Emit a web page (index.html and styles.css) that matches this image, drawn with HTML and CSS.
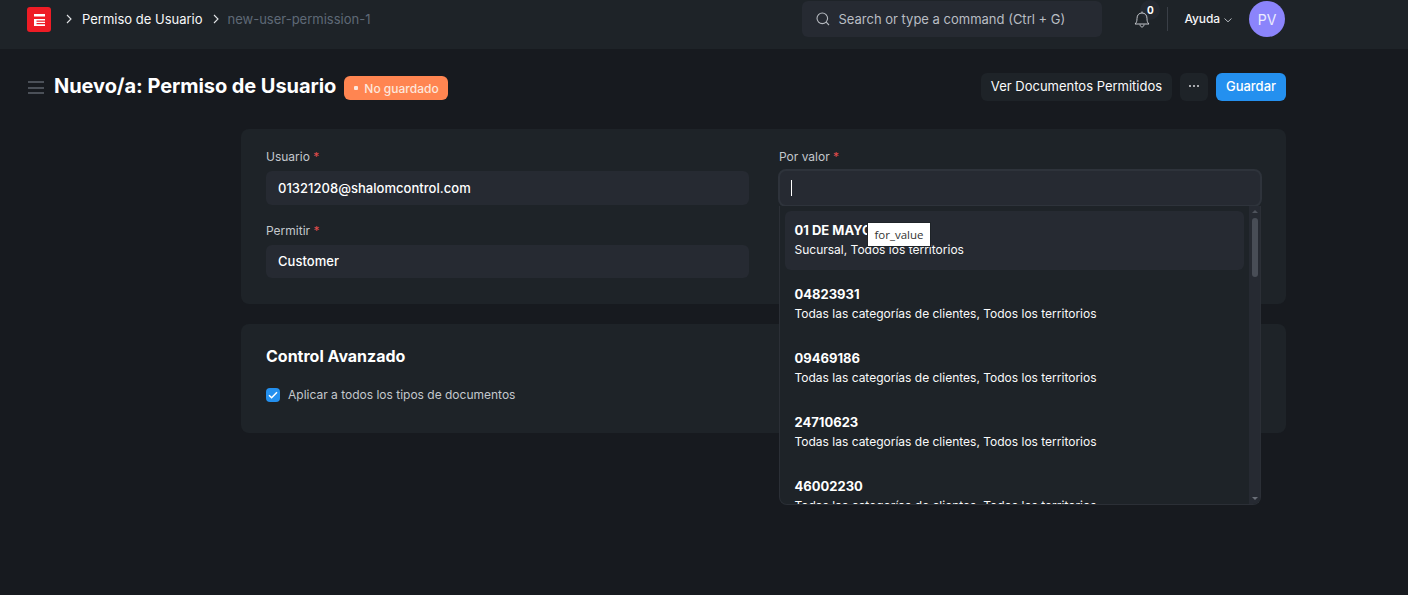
FILE: index.html
```html
<!DOCTYPE html>
<html lang="es">
<head>
<meta charset="utf-8">
<title>Nuevo/a: Permiso de Usuario</title>
<link rel="stylesheet" href="styles.css">
</head>
<body>
<header class="navbar">
  <div class="logo">
    <svg width="11" height="12" viewBox="0 0 11 12"><path d="M0 0h11v2.500H0zM0 5h11v1.600H2.500v1.200H11V9H2.500v1.200H11V12H0z" fill="#fff"/></svg>
  </div>
  <svg class="crumb-sep first" width="8" height="10" viewBox="0 0 8 10"><path d="M2 1l4 4-4 4" fill="none" stroke="#e2e4e7" stroke-width="1.100"/></svg>
  <span class="crumb">Permiso de Usuario</span>
  <svg class="crumb-sep" width="8" height="10" viewBox="0 0 8 10"><path d="M2 1l4 4-4 4" fill="none" stroke="#e2e4e7" stroke-width="1.100"/></svg>
  <span class="crumb-muted">new-user-permission-1</span>
  <div class="nav-right">
    <div class="search">
      <svg width="14" height="14" viewBox="0 0 14 14"><circle cx="6.300" cy="6.300" r="5.300" fill="none" stroke="#b5b9bf" stroke-width="1.100"/><path d="M10.200 10.200L13 13" stroke="#b5b9bf" stroke-width="1.100"/></svg>
      <span>Search or type a command (Ctrl + G)</span>
    </div>
    <div class="bell">
      <span class="bell-badge">0</span>
      <svg width="16" height="18" viewBox="0 0 16 18"><path d="M1 14c1.600-1.400 2-3 2-5.500C3 5 5 3 8 3s5 2 5 5.500c0 2.500.4 4.100 2 5.500zM6 14.500c0 1.500 1 2.500 2 2.500s2-1 2-2.500M8 3V1.500" fill="none" stroke="#c3c6cb" stroke-width="1"/></svg>
    </div>
    <div class="nav-divider"></div>
    <span class="help">Ayuda</span>
    <svg class="help-chev" width="8" height="6" viewBox="0 0 8 6"><path d="M.5 1.500L4 4.800l3.500-3.300" fill="none" stroke="#b5b9bf" stroke-width="1"/></svg>
    <div class="avatar">PV</div>
  </div>
</header>

<main class="page">
  <div class="page-head">
    <div class="menu-toggle"><i></i><i></i><i></i></div>
    <h1 class="title">Nuevo/a: Permiso de Usuario</h1>
    <span class="status"><b class="status-dot"></b>No guardado</span>
    <div class="actions">
      <button class="btn btn-wide">Ver Documentos Permitidos</button>
      <button class="btn btn-more"><i></i><i></i><i></i></button>
      <button class="btn btn-primary">Guardar</button>
    </div>
  </div>

  <div class="content">
    <section class="card card-form">
      <div class="col">
        <div class="field">
          <label class="label">Usuario <em>*</em></label>
          <div class="input">01321208@shalomcontrol.com</div>
        </div>
        <div class="field">
          <label class="label">Permitir <em>*</em></label>
          <div class="input input-short">Customer</div>
        </div>
      </div>
      <div class="col col-right">
        <div class="field">
          <label class="label label-right">Por valor <em>*</em></label>
          <div class="input input-focus"><span class="caret"></span></div>
          <div class="dropdown">
            <ul class="options">
              <li class="option active"><strong>01 DE MAYO</strong><span>Sucursal, Todos los territorios</span></li>
              <li class="option"><strong>04823931</strong><span>Todas las categorías de clientes, Todos los territorios</span></li>
              <li class="option"><strong>09469186</strong><span>Todas las categorías de clientes, Todos los territorios</span></li>
              <li class="option"><strong>24710623</strong><span>Todas las categorías de clientes, Todos los territorios</span></li>
              <li class="option"><strong>46002230</strong><span>Todas las categorías de clientes, Todos los territorios</span></li>
            </ul>
            <div class="scrollbar">
              <b class="arrow-up"></b>
              <b class="thumb"></b>
              <b class="arrow-down"></b>
            </div>
          </div>
          <div class="tooltip">for_value</div>
        </div>
      </div>
    </section>

    <section class="card card-adv">
      <h2 class="section-title">Control Avanzado</h2>
      <div class="check-row">
        <span class="checkbox">
          <svg width="10" height="8" viewBox="0 0 10 8"><path d="M1 4.200l2.600 2.500L9 1.200" fill="none" stroke="#fff" stroke-width="1.500"/></svg>
        </span>
        <span class="check-label">Aplicar a todos los tipos de documentos</span>
      </div>
    </section>
  </div>
</main>
</body>
</html>
```

FILE: styles.css
```css
* { box-sizing: border-box; }

html, body {
  margin: 0;
  height: 595px;
  overflow: hidden;
}

body {
  background: #171a1f;
  color: #f3f4f6;
  font-family: Inter, "Noto Sans", sans-serif;
  font-size: 13px;
}

.navbar {
  height: 49px;
  background: #1e2328;
  display: flex;
  align-items: flex-start;
  padding: 1px 123px 0 27px;
}

.logo {
  width: 24px;
  height: 25px;
  margin-top: 6px;
  background: #ee1c25;
  border-radius: 3px;
  display: flex;
  align-items: center;
  justify-content: center;
}

.crumb-sep {
  margin-top: 13px;
  margin-left: 9px;
  margin-right: 8px;
}
.crumb-sep.first {
  margin-left: 14px;
  margin-right: 9px;
}

.crumb {
  margin-top: 10px;
  line-height: 16px;
  color: #f7f8f9;
}

.crumb-muted {
  margin-top: 10px;
  line-height: 16px;
  color: #5e6976;
}

.nav-right {
  margin-left: auto;
  display: flex;
  align-items: flex-start;
}

.search {
  width: 300px;
  height: 36px;
  background: #262a32;
  border-radius: 6px;
  display: flex;
  align-items: center;
  gap: 8px;
  padding-left: 14px;
  color: #b9bdc3;
}

.bell {
  width: 33px;
  height: 30px;
  margin-left: 32px;
  padding-top: 9px;
  position: relative;
}

.bell-badge {
  position: absolute;
  left: 6px;
  top: -1px;
  width: 20px;
  height: 20px;
  border-radius: 50%;
  background: #242830;
  color: #fff;
  font-size: 10px;
  font-weight: 700;
  text-align: center;
  line-height: 20px;
}
.bell svg { position: relative; }

.nav-divider {
  width: 1px;
  height: 24px;
  margin-top: 6px;
  background: #3a3f47;
}

.help {
  margin-left: 16px;
  margin-top: 10px;
  line-height: 16px;
  font-size: 12px;
  font-weight: 500;
  letter-spacing: -0.1px;
  color: #f3f4f6;
}

.help-chev {
  margin: 16px 0 0 4px;
}

.avatar {
  width: 36px;
  height: 36px;
  margin-left: 17px;
  border-radius: 50%;
  background: #8b84fb;
  color: #ececfe;
  font-size: 14px;
  display: flex;
  align-items: center;
  justify-content: center;
}

.page {
  padding: 24px 122px 0 28px;
}

.page-head {
  display: flex;
  align-items: center;
  height: 28px;
}

.menu-toggle {
  width: 16px;
  height: 13px;
  margin-right: 10px;
  display: flex;
  flex-direction: column;
  justify-content: space-between;
  margin-top: 1px;
}
.menu-toggle i {
  display: block;
  height: 2px;
  background: #4b5058;
}

.title {
  margin: 0 8px 2px 0;
  font-size: 20px;
  font-weight: 700;
  line-height: 28px;
  letter-spacing: -0.06px;
  color: #fff;
}

.status {
  height: 24px;
  width: 104px;
  margin-top: 2px;
  border-radius: 6px;
  background: #ff8551;
  color: #fde7dc;
  font-size: 12px;
  font-weight: 500;
  display: flex;
  align-items: center;
  padding-left: 10px;
  gap: 6px;
}
.status-dot {
  width: 4px;
  height: 4px;
  background: #fde7dc;
  border-radius: 1px;
}

.actions {
  margin-left: auto;
  display: flex;
  gap: 8px;
}

.btn {
  height: 28px;
  border: 0;
  border-radius: 6px;
  background: #1e2328;
  color: #fafbfc;
  font: inherit;
  padding: 0 0 2px;
}
.btn-wide { width: 191px; }
.btn-more {
  width: 28px;
  display: flex;
  align-items: center;
  justify-content: center;
  gap: 2px;
}
.btn-more i {
  width: 2px;
  height: 2px;
  border-radius: 50%;
  background: #d8dadd;
}
.btn-primary {
  width: 70px;
  background: #2490ef;
  color: #fff;
  font-weight: 500;
}

.content {
  padding: 28px 0 0 213px;
  display: flex;
  flex-direction: column;
  gap: 20px;
}

.card {
  background: #1e2328;
  border-radius: 8px;
  padding-left: 25px;
  padding-right: 24px;
}

.card-form {
  height: 175px;
  padding-top: 20px;
  display: grid;
  grid-template-columns: 483px 484px;
  column-gap: 29px;
}

.field { position: relative; margin-bottom: 18px; }

.label {
  display: block;
  font-size: 12px;
  line-height: 16px;
  margin-bottom: 6px;
  color: #c4c8cd;
}
.label-right { padding-left: 1px; }
.label em {
  color: #e24c4c;
  font-style: normal;
}

.input {
  height: 34px;
  background: #262a32;
  border-radius: 6px;
  padding: 0 12px;
  line-height: 34px;
  font-weight: 500;
  letter-spacing: 0.03px;
  color: #fff;
}
.input-short { height: 33px; line-height: 33px; }

.input-focus {
  height: 38px;
  margin-top: -2px;
  border: 2px solid #2e333b;
  border-radius: 8px;
  padding-left: 11px;
  display: flex;
  align-items: center;
}

.caret {
  width: 1px;
  height: 16px;
  background: #fff;
}

.dropdown {
  position: absolute;
  left: 1px;
  top: 57px;
  width: 482px;
  height: 299px;
  background: #1e2328;
  border: 1px solid #2b2f36;
  border-top: 0;
  border-radius: 0 0 8px 8px;
  display: flex;
  overflow: hidden;
  z-index: 2;
}

.options {
  list-style: none;
  margin: 0;
  padding: 5px 5px 0;
  flex: 1;
  overflow: hidden;
}

.option {
  height: 59px;
  margin-bottom: 5px;
  padding: 11px 10px 0 9.5px;
  border-radius: 6px;
  display: flex;
  flex-direction: column;
  gap: 3px;
}
.option.active { background: #262a32; }
.option strong {
  font-size: 13px;
  line-height: 17px;
  font-weight: 700;
  color: #fff;
}
.option span {
  font-size: 12px;
  line-height: 16px;
  color: #fafafa;
}

.scrollbar {
  width: 11px;
  background: #262a32;
  display: flex;
  flex-direction: column;
  align-items: center;
  flex: none;
}
.arrow-up, .arrow-down {
  width: 0;
  height: 0;
  border-left: 3px solid transparent;
  border-right: 3px solid transparent;
}
.arrow-up {
  margin-top: 4px;
  border-bottom: 3px solid #4e535c;
}
.arrow-down {
  margin-top: auto;
  margin-bottom: 4px;
  border-top: 3px solid #6a6f78;
}
.thumb {
  width: 6px;
  height: 59px;
  margin-top: 5px;
  border-radius: 3px;
  background: #484d56;
}

.tooltip {
  position: absolute;
  left: 89px;
  top: 73px;
  width: 64px;
  height: 25px;
  background: #fff;
  border: 1px solid #1e2328;
  color: #333;
  font-family: "Open Sans", sans-serif;
  font-size: 11.500px;
  line-height: 24px;
  text-align: center;
  z-index: 3;
}

.card-adv {
  height: 109px;
  padding-top: 22px;
}

.section-title {
  margin: 0;
  font-size: 16px;
  line-height: 20px;
  font-weight: 700;
  color: #fff;
}

.check-row {
  margin-top: 21px;
  display: flex;
  align-items: center;
  gap: 8px;
}

.checkbox {
  width: 14px;
  height: 14px;
  border-radius: 4px;
  background: #2490ef;
  display: flex;
  align-items: center;
  justify-content: center;
}

.check-label {
  font-size: 12px;
  line-height: 16px;
  color: #c4c8cd;
}
```
